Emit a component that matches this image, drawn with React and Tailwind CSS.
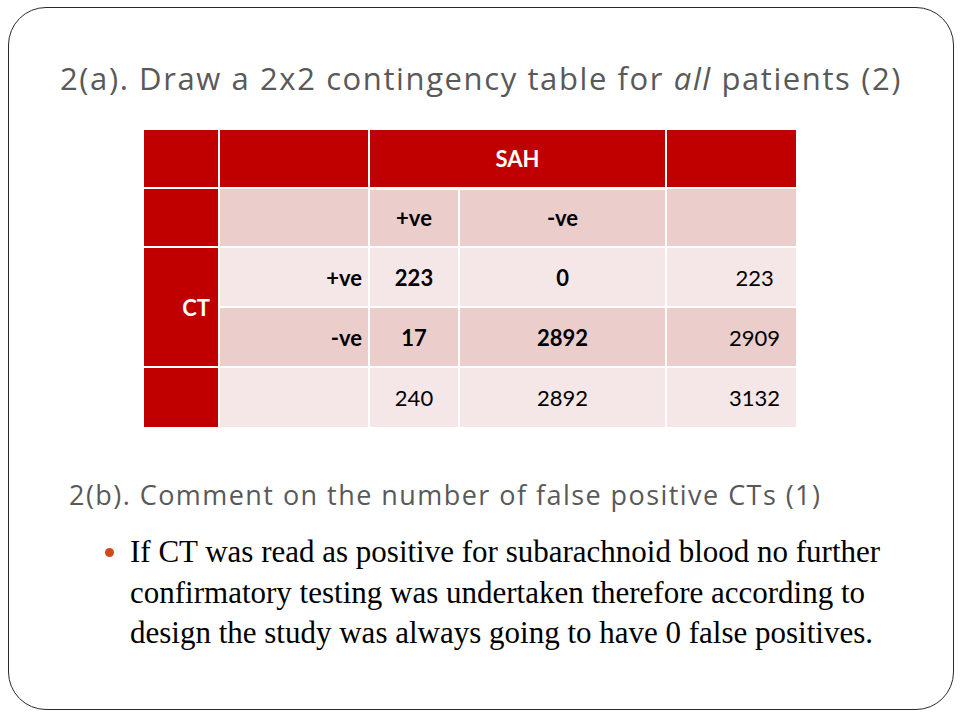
import React from 'react'

const red = 'bg-[#C00000]'
const dark = 'bg-[#EBCDCC]'
const light = 'bg-[#F5E7E7]'

export default function App() {
  const cell = 'border-2 border-white p-0'

  return (
    <div className="w-[960px] h-[720px] bg-white pt-[7px] pl-[8px]">
      <div className="w-[946px] h-[703px] border-[1.5px] border-[#2a2a2a] rounded-[38px] flex flex-col">
        {/* Title */}
        <h1 className="mt-[50px] text-center text-[31px] leading-[40px] text-[#595959] tracking-[1.6px]" style={{ fontFamily: '"Open Sans", "Liberation Sans", sans-serif' }}>
          2(a). Draw a 2x2 contingency table for <i>all</i> patients (2)
        </h1>

        {/* Contingency table */}
        <table
          className="mt-[30px] ml-[133px] w-[654px] table-fixed border-collapse text-[22px] text-black"
          style={{ fontFamily: 'Lato, "Liberation Sans", sans-serif' }}
        >
          <colgroup>
            <col className="w-[76px]" />
            <col className="w-[150px]" />
            <col className="w-[90px]" />
            <col className="w-[207px]" />
            <col className="w-[131px]" />
          </colgroup>
          <tbody>
            <tr className="h-[59px]">
              <td className={`${cell} ${red}`}></td>
              <td className={`${cell} ${red}`}></td>
              <td colSpan={2} className={`${cell} ${red} border-b-[3px] text-center font-bold text-white`}>SAH</td>
              <td className={`${cell} ${red}`}></td>
            </tr>
            <tr className="h-[59px]">
              <td className={`${cell} ${red}`}></td>
              <td className={`${cell} ${dark}`}></td>
              <td className={`${cell} ${dark} text-center font-bold`}>+ve</td>
              <td className={`${cell} ${dark} text-center font-bold`}>-ve</td>
              <td className={`${cell} ${dark}`}></td>
            </tr>
            <tr className="h-[60px]">
              <td rowSpan={2} className={`${cell} ${red} text-right pr-[8px] font-bold text-white`}>CT</td>
              <td className={`${cell} ${light} text-right pr-[6px] font-bold`}>+ve</td>
              <td className={`${cell} ${light} text-center font-bold`}>223</td>
              <td className={`${cell} ${light} text-center font-bold`}>0</td>
              <td className={`${cell} ${light} text-center pl-[46px]`}>223</td>
            </tr>
            <tr className="h-[60px]">
              <td className={`${cell} ${dark} text-right pr-[6px] font-bold`}>-ve</td>
              <td className={`${cell} ${dark} text-center font-bold`}>17</td>
              <td className={`${cell} ${dark} text-center font-bold`}>2892</td>
              <td className={`${cell} ${dark} text-center pl-[46px]`}>2909</td>
            </tr>
            <tr className="h-[61px]">
              <td className={`${cell} ${red}`}></td>
              <td className={`${cell} ${light}`}></td>
              <td className={`${cell} ${light} text-center`}>240</td>
              <td className={`${cell} ${light} text-center`}>2892</td>
              <td className={`${cell} ${light} text-center pl-[46px]`}>3132</td>
            </tr>
          </tbody>
        </table>

        {/* Part b */}
        <h2 className="mt-[48px] pl-[60px] text-[27px] leading-[36px] text-[#595959] tracking-[1.45px]" style={{ fontFamily: '"Open Sans", "Liberation Sans", sans-serif' }}>
          2(b). Comment on the number of false positive CTs (1)
        </h2>

        <ul className="mt-[19px] pl-[96px]">
          <li className="flex items-start">
            <span className="mt-[16px] w-[9px] h-[9px] rounded-full bg-[#D34817] shrink-0"></span>
            <p className="ml-[16px] w-[770px] text-[31px] leading-[40.5px] text-black" style={{ fontFamily: '"Liberation Serif", serif' }}>
              If CT was read as positive for subarachnoid blood no further confirmatory testing was undertaken therefore according to design the study was always going to have 0 false positives.
            </p>
          </li>
        </ul>
      </div>
    </div>
  )
}
